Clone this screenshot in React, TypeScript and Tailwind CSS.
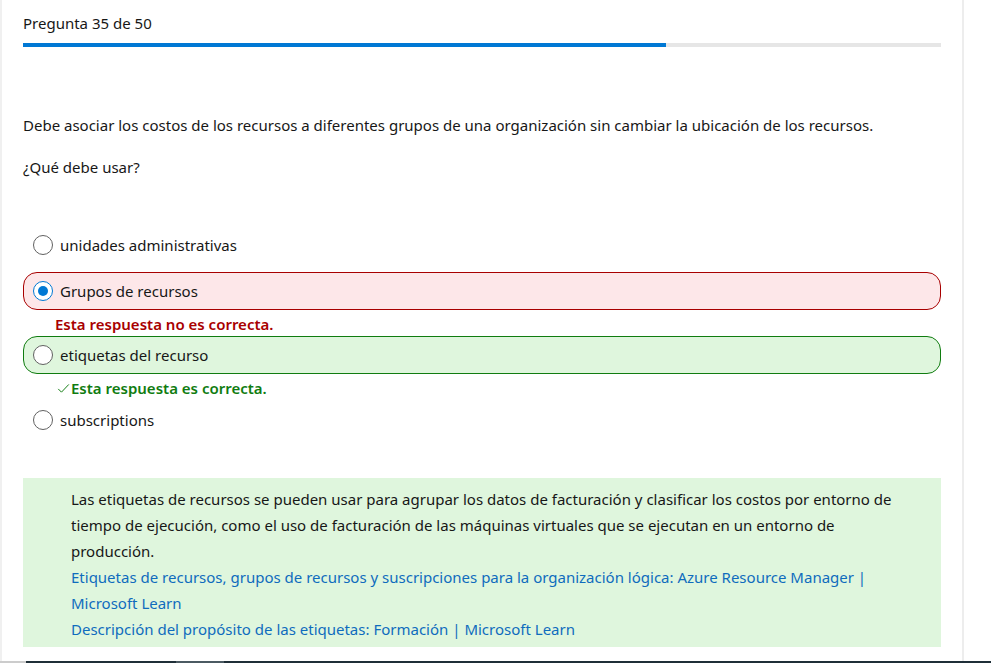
import React from 'react';

type Option = {
  label: string;
  state?: 'wrong' | 'right';
  selected?: boolean;
};

const options: Option[] = [
  { label: 'unidades administrativas' },
  { label: 'Grupos de recursos', state: 'wrong', selected: true },
  { label: 'etiquetas del recurso', state: 'right' },
  { label: 'subscriptions' },
];

function Radio({ selected }: { selected?: boolean }) {
  if (selected) {
    return (
      <span className="flex h-[20px] w-[20px] shrink-0 items-center justify-center rounded-full border-[1.5px] border-[#0078d4] bg-white">
        <span className="h-[10px] w-[10px] rounded-full bg-[#0078d4]" />
      </span>
    );
  }
  return <span className="h-[20px] w-[20px] shrink-0 rounded-full border border-[#616161] bg-white" />;
}

function OptionRow({ opt }: { opt: Option }) {
  const box =
    opt.state === 'wrong'
      ? 'border border-[#a80000] bg-[#fde7e9]'
      : opt.state === 'right'
        ? 'border border-[#107c10] bg-[#dff6dd]'
        : 'border border-transparent';
  return (
    <div>
      <div className={`flex h-[38px] items-center gap-[7px] rounded-[14px] pl-[9px] ${box}`}>
        <Radio selected={opt.selected} />
        <span className="text-[15px] text-[#171717]">{opt.label}</span>
      </div>
      {opt.state === 'wrong' && (
        <p className="mt-[3px] h-[22px] pl-[32px] text-[15px] font-semibold leading-[22px] text-[#a80000]">
          Esta respuesta no es correcta.
        </p>
      )}
      {opt.state === 'right' && (
        <p className="mt-[3px] flex h-[22px] items-center pl-[34px] text-[15px] font-semibold leading-[22px] text-[#107c10]">
          <svg width="13" height="13" viewBox="0 0 16 16" className="mr-[1px]">
            <path d="M1.5 8.5 L5.5 12.5 L14.5 3" fill="none" stroke="#107c10" strokeWidth="1.2" />
          </svg>
          Esta respuesta es correcta.
        </p>
      )}
    </div>
  );
}

export default function App() {
  return (
    <div
      className="relative h-[663px] w-[991px] overflow-hidden bg-white text-[#171717]"
      style={{ fontFamily: '"Noto Sans", "Open Sans", sans-serif' }}
    >
      <div className="flex h-[661px]">
        <div className="w-[2px] shrink-0 bg-[#f0f0f0]" />
        <main className="w-[960px] shrink-0 pl-[21px] pr-[21px]">
          <p className="pt-[12px] text-[15px] leading-[22px]">Pregunta 35 de 50</p>
          <div className="mt-[9px] flex h-[4px] bg-[#e6e6e6]">
            <div className="h-full w-[70%] bg-[#0078d4]" />
          </div>

          <p className="mt-[67px] text-[15px] leading-[22px]">
            Debe asociar los costos de los recursos a diferentes grupos de una organización sin cambiar la ubicación de los recursos.
          </p>
          <p className="mt-[20px] text-[15px] leading-[22px]">¿Qué debe usar?</p>

          <div className="mt-[48px]">
            <OptionRow opt={options[0]} />
          </div>
          <div className="mt-[8px] flex flex-col gap-[1px]">
            <OptionRow opt={options[1]} />
            <OptionRow opt={options[2]} />
          </div>
          <div className="mt-[2px]">
            <OptionRow opt={options[3]} />
          </div>

          <div className="mt-[39px] bg-[#dff6dd] pb-[5px] pl-[48px] pr-[30px] pt-[8px] text-[15px] leading-[26px]">
            <p>
              Las etiquetas de recursos se pueden usar para agrupar los datos de facturación y clasificar los costos por entorno de tiempo de ejecución, como el uso de facturación de las máquinas virtuales que se ejecutan en un entorno de producción.
            </p>
            <p className="text-[#0f6cbd]">
              <a href="#">Etiquetas de recursos, grupos de recursos y suscripciones para la organización lógica: Azure Resource Manager</a>{' '}
              | <a href="#">Microsoft Learn</a>
            </p>
            <p className="text-[#0f6cbd]">
              <a href="#">Descripción del propósito de las etiquetas: Formación</a> | <a href="#">Microsoft Learn</a>
            </p>
          </div>
        </main>
        <div className="w-[2px] shrink-0 bg-[#ededed]" />
        <div className="flex-1 bg-white" />
      </div>
      <div className="flex h-[2px]">
        <div className="w-[26px] bg-[#cccccc]" />
        <div className="w-[150px] bg-[#1f2f38]" />
        <div className="w-[48px] bg-[#4b5a62]" />
        <div className="flex-1 bg-[#1f2f38]" />
      </div>
    </div>
  );
}
